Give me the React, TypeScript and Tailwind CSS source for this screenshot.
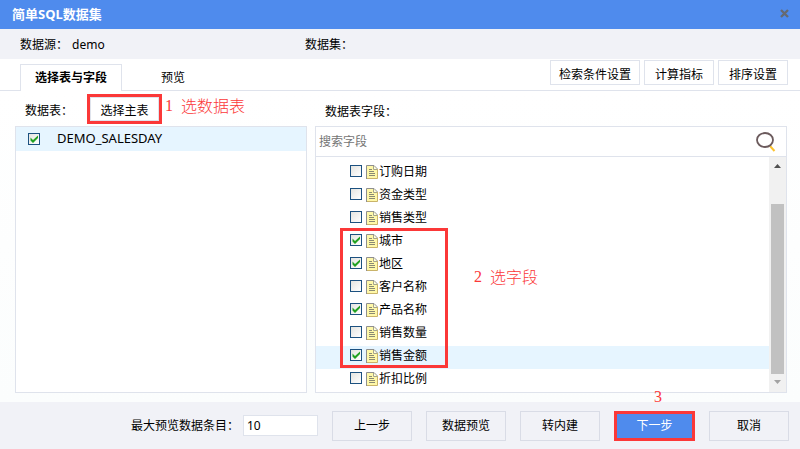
import { useState } from "react";
import type { ReactNode } from "react";

const FIELDS = [
  { name: "订购日期", checked: false },
  { name: "资金类型", checked: false },
  { name: "销售类型", checked: false },
  { name: "城市", checked: true },
  { name: "地区", checked: true },
  { name: "客户名称", checked: false },
  { name: "产品名称", checked: true },
  { name: "销售数量", checked: false },
  { name: "销售金额", checked: true, active: true },
  { name: "折扣比例", checked: false },
];

function CheckBox({ id, initial }: { id: string; initial: boolean }) {
  const [on, setOn] = useState(initial);
  return (
    <span className="grid size-3 shrink-0">
      <input
        id={id}
        type="checkbox"
        checked={on}
        onChange={() => setOn(!on)}
        className="col-start-1 row-start-1 size-3 appearance-none border border-[#1c5180] bg-linear-to-br from-[#e4e4e0] to-white"
      />
      {on && (
        <svg viewBox="0 0 12 12" className="pointer-events-none col-start-1 row-start-1 size-3">
          <path d="M2.500 4.500v3L5 10 10 5V2.500L5 7Z" fill="#21a121" />
        </svg>
      )}
    </span>
  );
}

function PageIcon() {
  return (
    <svg viewBox="0 0 12 14" className="h-[14px] w-3 shrink-0">
      <path d="M.5.5h7l4 4v9H.5Z" fill="#fff8a8" />
      <path d="M11.500 4v9.500H1" fill="none" stroke="#c9b36a" />
      <path d="M.5 14V.5H8L11.500 4" fill="none" stroke="#8f8f8f" />
      <path d="M7.500 1v3.500H11" fill="#fffde0" stroke="#a5a58c" />
      <path d="M3 4.500h3M3 6.500h5M3 8.500h6M3 10.500h6" stroke="#8a8a74" />
    </svg>
  );
}

function ToolButton({ className, children }: { className: string; children: ReactNode }) {
  return (
    <button type="button" className={`h-[25px] border border-[#dfe3ec] bg-white pt-1 text-center leading-5 ${className}`}>
      {children}
    </button>
  );
}

function FooterButton({ children }: { children: ReactNode }) {
  return (
    <button type="button" className="h-[30px] w-20 border border-[#d9dce6] bg-[#f1f2f7]">
      {children}
    </button>
  );
}

function Note({ step, text, className }: { step: string; text?: string; className: string }) {
  return (
    <span className={`pointer-events-none flex items-center gap-2 text-base leading-5 whitespace-nowrap text-[#fb3838] ${className}`}>
      <span className="font-['Liberation_Serif',serif]">{step}</span>
      {text && <span className="font-light">{text}</span>}
    </span>
  );
}

export default function App() {
  return (
    <div className="flex min-h-screen flex-col bg-white font-['Noto_Sans','Noto_Sans_CJK_SC',sans-serif] text-xs text-black">
      <header className="flex h-[29px] items-center justify-between bg-[#4f8bed] pr-[11px] pb-0.5 pl-3 text-white">
        <h1 className="text-[13px] leading-5 font-bold">简单SQL数据集</h1>
        <button type="button" aria-label="关闭">
          <svg viewBox="0 0 9 9" className="size-[9px]">
            <path d="M1 1l7 7M8 1L1 8" stroke="#666a70" strokeWidth="2.400" />
          </svg>
        </button>
      </header>

      <section className="flex h-[30px] items-center bg-[#f1f2f7] pt-0.5 pl-5">
        <p className="flex w-[285px] gap-1">
          <span>数据源：</span>
          <span>demo</span>
        </p>
        <p>数据集：</p>
      </section>

      <nav className="flex h-8 items-end justify-between border-b border-[#dfe3ec] pr-3 pl-5">
        <div role="tablist" className="-mb-px flex h-[27px]">
          <button type="button" role="tab" aria-selected="true" className="w-[102px] border border-b-0 border-[#dfe3ec] bg-white font-bold">
            选择表与字段
          </button>
          <button type="button" role="tab" aria-selected="false" className="w-[102px]">
            预览
          </button>
        </div>
        <div className="flex gap-1 self-start pt-px">
          <ToolButton className="w-[90px]">检索条件设置</ToolButton>
          <ToolButton className="w-[70px]">计算指标</ToolButton>
          <ToolButton className="w-[70px]">排序设置</ToolButton>
        </div>
      </nav>

      <main className="flex grow gap-2 bg-linear-to-b from-white to-[#fbfdfd] pr-[13px] pb-[9px] pl-[15px]">
        <section className="flex w-[292px] shrink-0 flex-col">
          <div className="flex h-[35px] items-center pl-2.5">
            <span className="w-[62px] pt-1">数据表：</span>
            <button type="button" className="h-[30px] w-[75px] border-3 border-[#fb3838] bg-white pt-1 inset-shadow-[0_0_0_1px_#dfe3ec]">
              选择主表
            </button>
            <Note step="1" text="选数据表" className="ml-[3px] pb-1.5" />
          </div>
          <div className="grow border border-[#dfe3ec] bg-white">
            <label htmlFor="table-main" className="flex h-6 items-center bg-[#e6f5ff] pl-3">
              <CheckBox id="table-main" initial />
              <span className="pl-[17px] text-[13px]">DEMO_SALESDAY</span>
            </label>
          </div>
        </section>

        <section className="flex min-w-0 grow flex-col">
          <div className="flex h-[35px] items-center pt-1.5 pl-2.5">数据表字段：</div>
          <div className="flex grow flex-col border border-[#dfe3ec] bg-white">
            <div className="flex h-[30px] items-center border-b border-[#dfe3ec] pr-2.5">
              <input
                type="text"
                aria-label="搜索字段"
                placeholder="搜索字段"
                className="min-w-0 grow bg-transparent pl-[3px] outline-none placeholder:text-[#757575]"
              />
              <button type="button" aria-label="搜索">
                <svg viewBox="0 0 20 20" className="size-5">
                  <path d="M14 14l4.500 5" stroke="#fcc32f" strokeWidth="2" />
                  <ellipse cx="9" cy="8" rx="8" ry="7" fill="none" stroke="#6b5a5c" strokeWidth="1.800" />
                </svg>
              </button>
            </div>
            <div className="flex grow">
              <ul className="relative grow pt-[5px]">
                {FIELDS.map((field, i) => (
                  <li key={field.name} className={field.active ? "bg-[#e6f5ff]" : ""}>
                    <label htmlFor={`field-${i}`} className="flex h-[23px] items-center pb-[5px] pl-[34px]">
                      <CheckBox id={`field-${i}`} initial={field.checked} />
                      <span className="flex items-center gap-px pt-0.5 pl-1">
                        <PageIcon />
                        {field.name}
                      </span>
                    </label>
                  </li>
                ))}
                <li aria-hidden="true" className="pointer-events-none absolute top-[71px] left-6 h-[140px] w-[108px] border-3 border-[#fb3838]" />
                <li className="pointer-events-none absolute top-[110px] left-[158px]">
                  <Note step="2" text="选字段" className="" />
                </li>
              </ul>
              <div aria-hidden="true" className="flex w-[17px] flex-col items-center bg-[#f1f1f1]">
                <svg viewBox="0 0 7 4" className="mt-[7px] h-1 w-[7px]">
                  <path d="M0 4L3.500 0 7 4Z" fill="#505050" />
                </svg>
                <div className="mt-9 mb-1.5 w-[13px] grow bg-[#c1c1c1]" />
                <svg viewBox="0 0 7 4" className="mb-2 h-1 w-[7px]">
                  <path d="M0 0h7L3.500 4Z" fill="#a3a3a3" />
                </svg>
              </div>
            </div>
          </div>
        </section>
      </main>

      <footer className="flex h-[47px] items-center justify-end gap-[14px] bg-[#f1f2f7] pr-[11px]">
        <div className="flex items-center">
          <label htmlFor="max-rows">最大预览数据条目：</label>
          <input
            id="max-rows"
            type="text"
            defaultValue="10"
            className="ml-1 h-[21px] w-[75px] border border-[#dfe3ec] bg-white pl-[3px] outline-none"
          />
        </div>
        <FooterButton>上一步</FooterButton>
        <FooterButton>数据预览</FooterButton>
        <FooterButton>转内建</FooterButton>
        <div className="relative">
          <Note step="3" className="absolute -top-6 left-10" />
          <button type="button" className="block h-[30px] w-[81px] border-3 border-[#fb3838] bg-[#4f8bed] text-white">
            下一步
          </button>
        </div>
        <FooterButton>取消</FooterButton>
      </footer>
    </div>
  );
}
